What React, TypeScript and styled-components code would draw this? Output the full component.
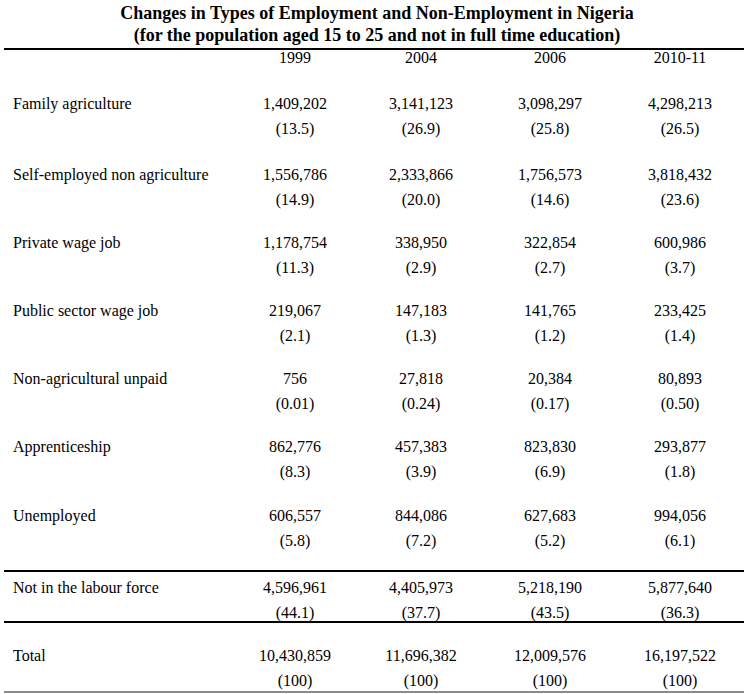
import React from "react";
import styled, { createGlobalStyle } from "styled-components";

const GlobalStyle = createGlobalStyle`
  html, body { margin: 0; padding: 0; background: #ffffff; }
  body { font-family: "Liberation Serif", "Times New Roman", serif; color: #000; }
`;

const Page = styled.div`
  width: 754px;
  height: 694px;
  background: #fff;
  overflow: hidden;
`;

const Title = styled.h1`
  margin: 0;
  padding-top: 2px;
  font-family: "Liberation Serif", "Times New Roman", serif;
  font-weight: 700;
  font-size: 18px;
  line-height: 22px;
  text-align: center;
  color: #000;
`;

const Table = styled.div`
  margin: 2px 10px 0 4px;
  border-top: 2px solid #000;
`;

const Row = styled.div<{ $pt: number; $h?: number; $rule?: "black" | "gray" }>`
  display: grid;
  grid-template-columns: 216px 150px 102px 156px 104px 1fr;
  padding-top: ${(p) => p.$pt}px;
  height: ${(p) => (p.$h ? `${p.$h}px` : "auto")};
  box-sizing: border-box;
  font-size: 16px;
  line-height: 25px;
  border-bottom: ${(p) =>
    p.$rule === "black" ? "2px solid #000" : p.$rule === "gray" ? "2px solid #8a8a8a" : "none"};
`;

const HeaderRow = styled(Row)`
  line-height: 16px;
`;

const Label = styled.div`
  padding-left: 9px;
  white-space: nowrap;
`;

const Cell = styled.div`
  display: flex;
  flex-direction: column;
  align-items: center;
  white-space: nowrap;
`;

const Line = styled.span`
  display: block;
`;

type DataRow = {
  label: string;
  values: [string, string][];
  pt: number;
  h?: number;
  rule?: "black" | "gray";
};

const years = ["1999", "2004", "2006", "2010-11"];

const rows: DataRow[] = [
  {
    label: "Family agriculture",
    values: [["1,409,202", "(13.5)"], ["3,141,123", "(26.9)"], ["3,098,297", "(25.8)"], ["4,298,213", "(26.5)"]],
    pt: 25,
  },
  {
    label: "Self-employed non agriculture",
    values: [["1,556,786", "(14.9)"], ["2,333,866", "(20.0)"], ["1,756,573", "(14.6)"], ["3,818,432", "(23.6)"]],
    pt: 21,
  },
  {
    label: "Private wage job",
    values: [["1,178,754", "(11.3)"], ["338,950", "(2.9)"], ["322,854", "(2.7)"], ["600,986", "(3.7)"]],
    pt: 18,
  },
  {
    label: "Public sector wage job",
    values: [["219,067", "(2.1)"], ["147,183", "(1.3)"], ["141,765", "(1.2)"], ["233,425", "(1.4)"]],
    pt: 18,
  },
  {
    label: "Non-agricultural unpaid",
    values: [["756", "(0.01)"], ["27,818", "(0.24)"], ["20,384", "(0.17)"], ["80,893", "(0.50)"]],
    pt: 18,
  },
  {
    label: "Apprenticeship",
    values: [["862,776", "(8.3)"], ["457,383", "(3.9)"], ["823,830", "(6.9)"], ["293,877", "(1.8)"]],
    pt: 18,
  },
  {
    label: "Unemployed",
    values: [["606,557", "(5.8)"], ["844,086", "(7.2)"], ["627,683", "(5.2)"], ["994,056", "(6.1)"]],
    pt: 19,
    h: 88,
    rule: "black",
  },
  {
    label: "Not in the labour force",
    values: [["4,596,961", "(44.1)"], ["4,405,973", "(37.7)"], ["5,218,190", "(43.5)"], ["5,877,640", "(36.3)"]],
    pt: 3,
    h: 51,
    rule: "black",
  },
  {
    label: "Total",
    values: [["10,430,859", "(100)"], ["11,696,382", "(100)"], ["12,009,576", "(100)"], ["16,197,522", "(100)"]],
    pt: 20,
    h: 70,
    rule: "gray",
  },
];

export default function App() {
  return (
    <Page>
      <GlobalStyle />
      <Title>
        Changes in Types of Employment and Non-Employment in Nigeria
        <br />
        (for the population aged 15 to 25 and not in full time education)
      </Title>
      <Table>
        <HeaderRow $pt={0} $h={16}>
          <Label />
          {years.map((y) => (
            <Cell key={y}>{y}</Cell>
          ))}
        </HeaderRow>
        {rows.map((r) => (
          <Row key={r.label} $pt={r.pt} $h={r.h} $rule={r.rule}>
            <Label>{r.label}</Label>
            {r.values.map(([n, pct], i) => (
              <Cell key={i}>
                <Line>{n}</Line>
                <Line>{pct}</Line>
              </Cell>
            ))}
          </Row>
        ))}
      </Table>
    </Page>
  );
}
